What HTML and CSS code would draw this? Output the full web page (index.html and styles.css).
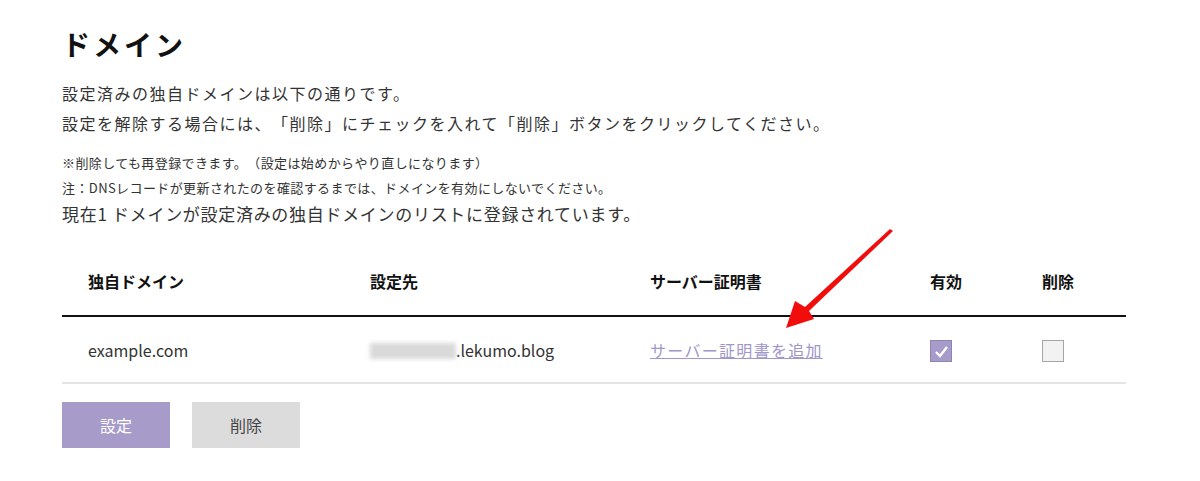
FILE: index.html
```html
<!DOCTYPE html>
<html lang="ja">

<head>
    <meta charset="UTF-8">
    <meta name="viewport" content="width=device-width, initial-scale=1.0">
    <title>ドメイン</title>
    <link rel="stylesheet" href="styles.css">
</head>

<body>
    <div class="pagina">
        <h1 class="titulo">ドメイン</h1>
        <p class="texto">設定済みの独自ドメインは以下の通りです。</p>
        <p class="texto">設定を解除する場合には、「削除」にチェックを入れて「削除」ボタンをクリックしてください。</p>

        <p class="nota">※削除しても再登録できます。（設定は始めからやり直しになります）</p>
        <p class="nota">注：DNSレコードが更新されたのを確認するまでは、ドメインを有効にしないでください。</p>
        <p class="contagem">現在1 ドメインが設定済みの独自ドメインのリストに登録されています。</p>

        <table class="tabela">
            <thead>
                <tr>
                    <th class="c1">独自ドメイン</th>
                    <th class="c2">設定先</th>
                    <th class="c3">サーバー証明書</th>
                    <th class="c4">有効</th>
                    <th class="c5">削除</th>
                </tr>
            </thead>
            <tbody>
                <tr>
                    <td>example.com</td>
                    <td><span class="borrado"></span>.lekumo.blog</td>
                    <td><a href="#" class="link">サーバー証明書を追加</a></td>
                    <td><span class="caixa marcada">
                        <svg width="15" height="13" viewBox="0 0 15 13"><path d="M2 7 L6 11 L13 2" fill="none" stroke="#fff" stroke-width="2.4"/></svg>
                    </span></td>
                    <td><span class="caixa"></span></td>
                </tr>
            </tbody>
        </table>

        <div class="botoes">
            <div class="btn roxo">設定</div>
            <div class="btn cinza">削除</div>
        </div>
    </div>

    <!-- seta vermelha por cima da tela -->
    <svg class="seta" width="1200" height="481" viewBox="0 0 1200 481">
        <polygon points="893,231 809,311 814,319 786,328 795,301 805,307 890,229" fill="#f20d0d"/>
    </svg>
</body>

</html>
```

FILE: styles.css
```css
* {
    margin: 0;
    padding: 0;
    box-sizing: border-box;
}

body {
    font-family: "Noto Sans CJK JP", "Noto Sans", sans-serif;
    color: #333;
    background: white;
    text-spacing-trim: space-all;
}

.pagina {
    width: 1064px;
    margin-left: 62px;
    padding-top: 22px;
}

.titulo {
    font-size: 28px;
    font-weight: bold;
    letter-spacing: 3px;
    color: #111;
    line-height: 44px;
    margin-bottom: 12px;
}

.texto {
    font-size: 16px;
    letter-spacing: 1.5px;
    line-height: 30px;
}

.nota {
    font-size: 13px;
    letter-spacing: 0.4px;
    line-height: 25px;
}

.texto + .nota {
    margin-top: 12px;
}

.contagem {
    font-size: 17px;
    letter-spacing: 0.7px;
    line-height: 28px;
    margin-bottom: 18px;
}

.tabela {
    width: 1064px;
    border-collapse: collapse;
}

.tabela th {
    text-align: left;
    font-size: 16px;
    font-weight: bold;
    color: #111;
    height: 70px;
    padding-left: 26px;
    border-bottom: 2px solid #111;
}

.tabela td {
    font-size: 16px;
    height: 67px;
    padding-left: 26px;
    border-bottom: 2px solid #e2e4e8;
    vertical-align: middle;
}

.c1 { width: 282px; }
.c2 { width: 280px; }
.c3 { width: 280px; }
.c4 { width: 112px; }

.borrado {
    display: inline-block;
    width: 86px;
    height: 16px;
    vertical-align: -2px;
    background: #d9d9d9;
    filter: blur(2px);
}

.link {
    color: #a096cc;
    text-decoration: underline;
    letter-spacing: 1.3px;
}

.caixa {
    display: inline-flex;
    justify-content: center;
    align-items: center;
    width: 22px;
    height: 22px;
    border: 1px solid #a6a6a6;
    background: #f2f2f2;
    vertical-align: middle;
}

.marcada {
    background: #a69bc9;
    border-color: #8e84b4;
}

.botoes {
    display: flex;
    gap: 22px;
    margin-top: 18px;
}

.btn {
    width: 108px;
    height: 46px;
    display: flex;
    justify-content: center;
    align-items: center;
    font-size: 16px;
}

.roxo {
    background: #a69bc9;
    color: white;
}

.cinza {
    background: #dcdcdc;
    color: #444;
}

.seta {
    position: absolute;
    top: 0;
    left: 0;
    pointer-events: none;
}
```
